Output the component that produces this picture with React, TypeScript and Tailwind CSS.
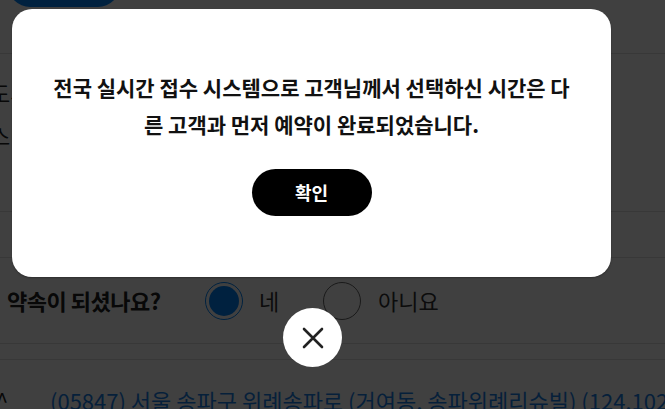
import React from "react";

function XIcon() {
  return (
    <svg width="22" height="22" viewBox="0 0 22 22" fill="none">
      <path d="M2 2L20 20M20 2L2 20" stroke="#222" strokeWidth="2.6" strokeLinecap="round" />
    </svg>
  );
}

export default function App() {
  return (
    <div
      className="relative h-[409px] w-full overflow-hidden bg-white"
      style={{ fontFamily: '"Noto Sans CJK KR", "Noto Sans", sans-serif' }}
    >
      {/* underlying page */}
      <div className="flex flex-col">
        <div className="h-[54px] border-b border-[#e0e0e0] pl-[8px]">
          <div className="-mt-[37px] h-[44px] w-[112px] rounded-full bg-[#0084fc]" />
        </div>
        <div className="flex h-[158px] flex-col gap-[10px] border-b border-[#e0e0e0] pt-[22px] text-[22px] text-[#222]">
          <div className="-ml-[10px] whitespace-nowrap">도시 정보</div>
          <div className="-ml-[10px] whitespace-nowrap">스티커 정보</div>
        </div>
        <div className="h-[46px] border-b border-[#e0e0e0]" />
        <div className="flex h-[86px] items-center border-b border-[#e0e0e0] pl-[7px]">
          <span className="w-[198px] shrink-0 text-[22px] font-bold tracking-[-0.5px] text-[#222]">약속이 되셨나요?</span>
          <span className="flex h-[38px] w-[38px] shrink-0 items-center justify-center rounded-full border border-[#0084fc]">
            <span className="h-[30px] w-[30px] rounded-full bg-[#0084fc]" />
          </span>
          <span className="ml-[16px] w-[64px] shrink-0 text-[22px] text-[#333]">네</span>
          <span className="h-[38px] w-[38px] shrink-0 rounded-full border border-[#666]" />
          <span className="ml-[17px] text-[22px] text-[#333]">아니요</span>
        </div>
        <div className="h-[16px] border-b border-[#e0e0e0]" />
        <div className="flex items-center pt-[24px] text-[22px] text-[#1a7fe8]">
          <span className="w-[50px] shrink-0 -ml-[4px] text-[#222]">^</span>
          <span className="ml-[4px] whitespace-nowrap">(05847) 서울 송파구 위례송파로 (거여동, 송파위례리슈빌) (124,102-1304)</span>
        </div>
      </div>

      {/* dim overlay */}
      <div className="absolute inset-0 bg-black/75" />

      {/* modal */}
      <div className="absolute left-[12px] top-[9px] flex h-[268px] w-[599px] flex-col items-center rounded-[20px] bg-white pt-[60px] shadow-[0_1px_2px_rgba(0,0,0,0.3)]">
        <p className="w-[535px] text-center text-[21px] font-bold leading-[37px] text-[#111]">
          전국 실시간 접수 시스템으로 고객님께서 선택하신 시간은 다른 고객과 먼저 예약이 완료되었습니다.
        </p>
        <button className="mt-[26px] flex h-[47px] w-[120px] items-center justify-center rounded-full bg-black text-[18px] font-bold text-white">
          확인
        </button>
      </div>

      {/* close button */}
      <button className="absolute left-[283px] top-[308px] flex h-[59px] w-[59px] items-center justify-center rounded-full bg-white">
        <XIcon />
      </button>
    </div>
  );
}
